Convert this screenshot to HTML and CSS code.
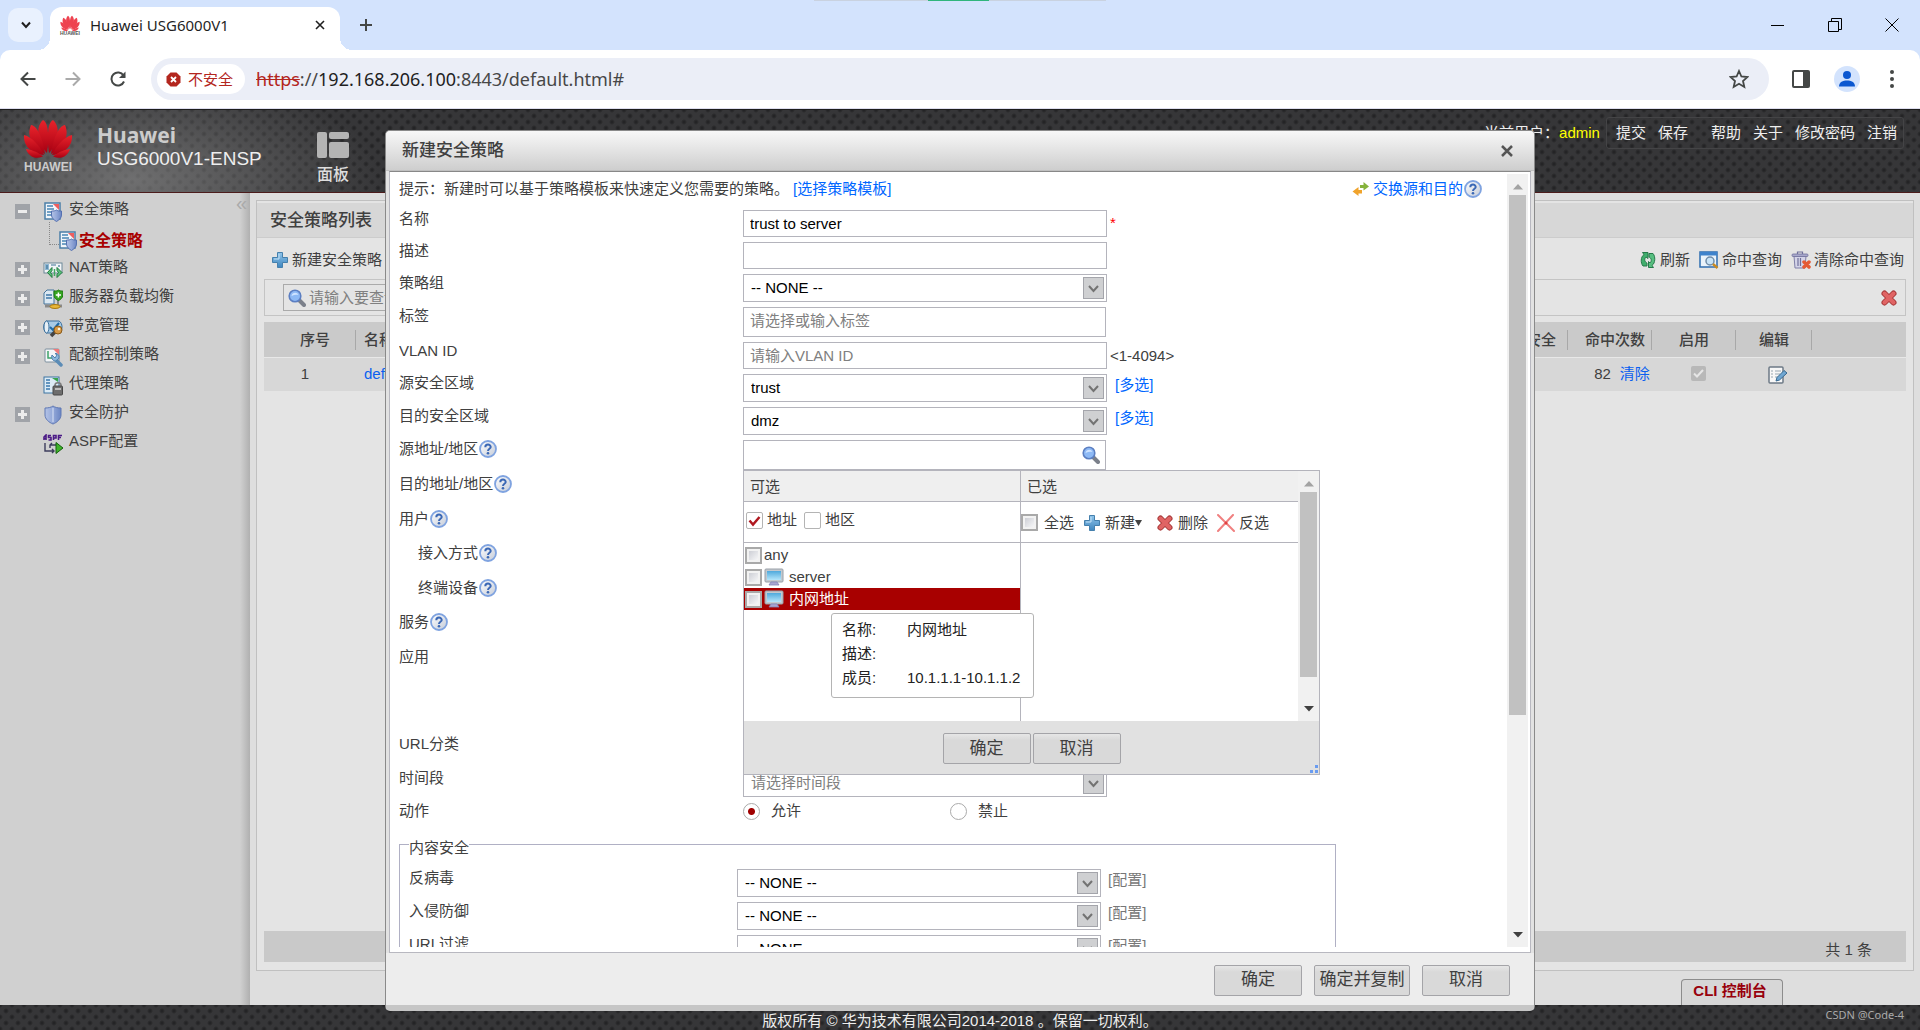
FILE: index.html
```html
<!DOCTYPE html>
<html lang="zh-CN">
<head>
<meta charset="utf-8">
<title>Huawei USG6000V1</title>
<link rel="stylesheet" href="styles.css">
</head>
<body>
<svg class="sprite" aria-hidden="true">
  <defs>
    <linearGradient id="g-red" x1="0" y1="0" x2="0" y2="1"><stop offset="0" stop-color="#e8232b"/><stop offset="1" stop-color="#a80012"/></linearGradient>
    <linearGradient id="g-blue" x1="0" y1="0" x2="0" y2="1"><stop offset="0" stop-color="#8fc4ea"/><stop offset="1" stop-color="#3f86bf"/></linearGradient>
    <linearGradient id="g-screen" x1="0" y1="0" x2="0" y2="1"><stop offset="0" stop-color="#4fa9dc"/><stop offset="1" stop-color="#b5e6fb"/></linearGradient>
    <linearGradient id="g-shield" x1="0" y1="0" x2="1" y2="0"><stop offset="0" stop-color="#b4c3e6"/><stop offset=".5" stop-color="#93a8d8"/><stop offset="1" stop-color="#6c86c4"/></linearGradient>
    <linearGradient id="g-help" x1="0" y1="0" x2="1" y2="1"><stop offset="0" stop-color="#ffffff"/><stop offset="1" stop-color="#c4cbd8"/></linearGradient>
  </defs>
  <symbol id="i-flower" viewBox="0 0 50 40">
    <path d="M24 35C16 27 11 10 20 2C26 5 26 22 24 35Z"/>
    <path d="M26 35C34 27 39 10 30 2C24 5 24 22 26 35Z"/>
    <path d="M22 36C10 30 3 18 8 7C15 8 20 22 22 36Z"/>
    <path d="M28 36C40 30 47 18 42 7C35 8 30 22 28 36Z"/>
    <path d="M21 37C9 36 0 28 1 17C9 19 17 28 21 37Z"/>
    <path d="M29 37C41 36 50 28 49 17C41 19 33 28 29 37Z"/>
    <path d="M20 38.500C12 42 5 38 3 31C10 32 16 35 20 38.500Z"/>
    <path d="M30 38.500C38 42 45 38 47 31C40 32 34 35 30 38.500Z"/>
  </symbol>
  <symbol id="i-help" viewBox="0 0 18 18">
    <circle cx="9" cy="9" r="8" fill="url(#g-help)" stroke="#7fa3e0" stroke-width="1.800"/>
    <path d="M6.300 7.200C6.300 3.700 11.700 3.800 11.700 7C11.700 8.900 9 8.700 9 11" fill="none" stroke="#3b68b5" stroke-width="2"/>
    <circle cx="9" cy="13.300" r="1.300" fill="#3b68b5"/>
  </symbol>
  <symbol id="i-plus" viewBox="0 0 18 18">
    <path d="M6.500 1.500H11.500V6.500H16.500V11.500H11.500V16.500H6.500V11.500H1.500V6.500H6.500Z" fill="url(#g-blue)" stroke="#4580ad" stroke-linejoin="round"/>
    <path d="M8 3V8H3" fill="none" stroke="#c5e2f6" stroke-width="1"/>
  </symbol>
  <symbol id="i-search" viewBox="0 0 18 18">
    <path d="M11 11L16 16" stroke="#7b808a" stroke-width="4" stroke-linecap="round"/>
    <circle cx="7" cy="7" r="5.800" fill="#8db9f5" stroke="#5c7fc2" stroke-width="1.600"/>
    <path d="M3.500 7C4 3.500 9 2.500 10.500 6C8 5.500 6 6 3.500 7Z" fill="#cfe3ff"/>
  </symbol>
  <symbol id="i-cross" viewBox="0 0 18 18">
    <path d="M4.500 4.500L13.500 13.500M13.500 4.500L4.500 13.500" stroke="#a83a3a" stroke-width="6" stroke-linecap="round"/>
    <path d="M4.500 4.500L13.500 13.500M13.500 4.500L4.500 13.500" stroke="#e06464" stroke-width="4" stroke-linecap="round"/>
  </symbol>
  <symbol id="i-thin-cross" viewBox="0 0 18 18">
    <path d="M1 1L17 17M16 1L1 17" stroke="#f08080" stroke-width="2" stroke-linecap="round"/>
    <circle cx="9" cy="9" r="1.500" fill="#e04040"/>
  </symbol>
  <symbol id="i-shield" viewBox="0 0 18 20">
    <path d="M9 1C11 2.500 14 3 17 3V10C17 14 13 17.500 9 19C5 17.500 1 14 1 10V3C4 3 7 2.500 9 1Z" fill="url(#g-shield)" stroke="#5f78b4" stroke-width="1"/>
    <path d="M9 3V17" stroke="#dbe4f7" stroke-width="1"/>
  </symbol>
  <symbol id="i-policy" viewBox="0 0 18 20">
    <rect x="1" y="1" width="15" height="16" fill="#f2f6fa" stroke="#4b7fa8" stroke-width="1.500"/>
    <path d="M3 4H9M3 7H10M3 10H8M3 13H8" stroke="#4a86b5" stroke-width="1.500"/>
    <path d="M9 2H15V8Z" fill="#ee5f5f"/>
    <path d="M12.500 8C14 9 15.500 9 17.500 9V13C17.500 16 15 18 12.500 19.500C10 18 7.500 16 7.500 13V9C9.500 9 11 9 12.500 8Z" fill="url(#g-shield)" stroke="#5470b0" stroke-width="1"/>
  </symbol>
  <symbol id="i-nat" viewBox="0 0 20 18">
    <rect x="1" y="2" width="18" height="10" fill="#f2f5f7" stroke="#6d8798" stroke-width="1"/>
    <rect x="2" y="3" width="4" height="6" fill="#8fb8d4"/><path d="M4 4V8M8 4H13M16 4V6" stroke="#3f7396" stroke-width="1.200"/>
    <path d="M9 6.500L4.500 11.500L9 16.500V13.500L7.500 11.500L9 9.500Z" fill="#5cc07c" stroke="#1d7a3c" stroke-width="1"/>
    <path d="M14 6.500L19 11.500L14 16.500V13.500L15.500 11.500L14 9.500Z" fill="#5cc07c" stroke="#1d7a3c" stroke-width="1"/>
    <path d="M11.500 8V15" stroke="#3fa860" stroke-width="1.500"/>
  </symbol>
  <symbol id="i-balance" viewBox="0 0 20 20">
    <path d="M4 1H11V15H1V4Z" fill="#dbe8f2" stroke="#44749c" stroke-width="1"/>
    <path d="M3 6H9M3 9H9" stroke="#3d76a6" stroke-width="1.500"/>
    <path d="M15 10V16" stroke="#888" stroke-width="2"/><path d="M15.500 1C17 2 18.500 2 19.800 2V6C19.800 9 17.500 10.500 15.500 11.500C13 10.500 11 9 11 6V2C13 2 14 2 15.500 1Z" fill="#36a522" stroke="#1d7a10"/>
    <path d="M12.800 6H18M15.400 3.500V8.500" stroke="#fff" stroke-width="1.500"/>
    <path d="M2 17H19" stroke="#8a8a8a" stroke-width="3"/><ellipse cx="12" cy="17.500" rx="5" ry="2" fill="#e8b738" stroke="#a87a10"/>
  </symbol>
  <symbol id="i-band" viewBox="0 0 20 20">
    <path d="M3 3H16C20 5 20 13 16 15H3C0 12 0 6 3 3Z" fill="#a8cbe6" stroke="#3a6f9c" stroke-width="1"/>
    <ellipse cx="3.500" cy="9" rx="2.500" ry="6" fill="#e6eff6" stroke="#3a6f9c"/>
    <path d="M7 9L10 12L16 5" fill="none" stroke="#1d6aa8" stroke-width="2"/>
    <path d="M8 18L12 14" stroke="#444" stroke-width="3.500"/><circle cx="15" cy="12" r="4" fill="#d69a48" stroke="#8a5a18"/><circle cx="16" cy="11" r="1.300" fill="#fff3d6"/>
  </symbol>
  <symbol id="i-quota" viewBox="0 0 20 20">
    <rect x="2" y="2" width="14" height="13" rx="1" fill="#f3f5f7" stroke="#7c8f9e" stroke-width="1"/>
    <path d="M5 4V11H11" fill="none" stroke="#3fa36a" stroke-width="1.500"/><path d="M10 2H16V8Z" fill="#ee7a7a"/>
    <path d="M12 12L18 18" stroke="#5c8cb6" stroke-width="3.500" stroke-linecap="round"/>
    <path d="M9 8L12 11L14 8L12 6.500C15 6 17 9 15.500 12L12.500 14C9.500 14 8 11 9 8Z" fill="#8db8dc" stroke="#4f81ac" stroke-width="1"/>
  </symbol>
  <symbol id="i-proxy" viewBox="0 0 20 20">
    <rect x="1" y="1" width="15" height="16" fill="#dcebf5" stroke="#3c74a2" stroke-width="1"/>
    <path d="M3 4H7M3 7H7M3 10H7M3 13H7" stroke="#3b79ad" stroke-width="1.500"/><path d="M9 2L15 6V2Z" fill="#38a34c"/>
    <path d="M12 12V9C12 6 18 6 18 9V12" fill="none" stroke="#7b7b7b" stroke-width="1.500"/><rect x="10" y="10" width="9.500" height="9" rx="1" fill="#6d6d6d" stroke="#484848"/><path d="M12 13H18" stroke="#d9d9d9" stroke-width="1.500"/>
  </symbol>
  <symbol id="i-aspf" viewBox="0 0 20 20">
    <path d="M1 6V3L3 1V6M1 4.500H3M8 1.500H5.500V3.500H8V6H5.500M10.500 6V1.500H13V4H10.500M15.500 6V1.500H19M15.500 3.500H18" fill="none" stroke="#4b1a86" stroke-width="1.600"/>
    <path d="M2 9V17H11M9 15L11 17L9 19M13 11H7M9 9L7 11V14" fill="none" stroke="#3c3c5c" stroke-width="1.400"/>
    <path d="M13 8.500L20 14L13 19.500Z" fill="#3fb32a" stroke="#14600c" stroke-width="1"/>
  </symbol>
  <symbol id="i-refresh" viewBox="0 0 18 18">
    <path d="M8 15H4C1.500 12 1.500 6 5 3.500L3.500 1.500H9V7.500L7 6C5 8 5.500 11 8 12Z" fill="#3fae6c" stroke="#26794a" stroke-width="1"/>
    <path d="M10 2.500H14C16.500 5.500 16.500 12 13 14.500L14.500 16.500H9.500V10.500L11 12C13 10 12.500 7 10 6Z" fill="#57be80" stroke="#26794a" stroke-width="1"/>
  </symbol>
  <symbol id="i-query" viewBox="0 0 20 18">
    <rect x="1" y="1" width="17" height="15" fill="#eaf3fb" stroke="#2e6db0" stroke-width="1.500"/>
    <rect x="1" y="1" width="17" height="3.500" fill="#3f83cc"/>
    <circle cx="11" cy="10" r="4" fill="#c9e4f8" stroke="#6f8ca8" stroke-width="1.500"/><path d="M14 13L18.500 17" stroke="#c98a22" stroke-width="2.500"/>
  </symbol>
  <symbol id="i-trash" viewBox="0 0 20 18">
    <path d="M3 5H15L14 17H4Z" fill="#d4d4e8" stroke="#7f7fa8" stroke-width="1"/><rect x="1" y="3" width="16" height="2.500" rx="1" fill="#a9a9cc" stroke="#70709c" stroke-width=".8"/>
    <path d="M6.500 3V1H11.500V3M7 7V15M9.500 7V15" fill="none" stroke="#70709c" stroke-width="1.200"/>
    <path d="M13 11L18 16M18 11L13 16" stroke="#e55a34" stroke-width="3.500" stroke-linecap="round"/>
  </symbol>
  <symbol id="i-edit" viewBox="0 0 20 18">
    <rect x="1" y="1" width="14" height="16" rx="1" fill="#f7f7f7" stroke="#6d7a86" stroke-width="1.500"/>
    <path d="M3 5H5M3 8H5M3 11H5M7 5H13M7 8H12M7 11H10" stroke="#9aa7b2" stroke-width="1.200"/>
    <path d="M8 15L9 11.500L16 4.500L19 7L11.500 14Z" fill="#6fa6d2" stroke="#37688f" stroke-width="1"/>
  </symbol>
  <symbol id="i-swap" viewBox="0 0 18 16">
    <path d="M8 4H11.500V1L17 5.500L11.500 9.500V7H8Z" fill="#86b33c"/><path d="M10 9H6.500V6L0.500 10.500L6.500 15V12.500H10Z" fill="#f0a32c"/>
  </symbol>
  <symbol id="i-pc" viewBox="0 0 20 18">
    <rect x="1" y="1" width="18" height="13" rx="1" fill="#c3c9cf" stroke="#9aa0a8"/><rect x="3" y="3" width="14" height="9" fill="url(#g-screen)"/>
    <path d="M7 14H13L15 17H5Z" fill="#a8a6d0" stroke="#8784b8" stroke-width=".8"/>
  </symbol>
  <symbol id="i-tri-up" viewBox="0 0 10 6"><path d="M0 5.500L5 0L10 5.500Z" fill="#a3a3a3"/></symbol>
  <symbol id="i-tri-down" viewBox="0 0 10 6"><path d="M0 0L5 5.500L10 0Z" fill="#404040"/></symbol>
</svg>

<header class="chrome">
  <div class="capture-strip"><span></span></div>
  <div class="tabstrip">
    <button class="tab-search" aria-label="搜索标签页"><svg width="10" height="8" viewBox="0 0 10 8"><path d="M1 1.500L5 6L9 1.500" fill="none" stroke="#1f1f1f" stroke-width="2"/></svg></button>
    <div class="tab">
      <span class="favicon"><svg width="20" height="16" fill="#ee4350"><use href="#i-flower"/></svg><span>HUAWEI</span></span>
      <span class="tab-title">Huawei USG6000V1</span>
      <button class="plain" aria-label="关闭标签页"><svg width="10" height="10" viewBox="0 0 10 10"><path d="M1 1L9 9M9 1L1 9" stroke="#1f1f1f" stroke-width="1.600"/></svg></button>
    </div>
    <button class="plain new-tab" aria-label="新标签页"><svg width="14" height="14" viewBox="0 0 14 14"><path d="M7 1V13M1 7H13" stroke="#444746" stroke-width="2"/></svg></button>
    <div class="window-buttons">
      <button class="plain" aria-label="最小化"><svg width="14" height="14" viewBox="0 0 14 14"><path d="M0 7.500H13" stroke="#000"/></svg></button>
      <button class="plain" aria-label="还原"><svg width="14" height="14" viewBox="0 0 14 14"><path d="M.5 3.500H10.500V13.500H.5ZM3.500 3V.5H13.500V11.500H11" fill="none" stroke="#000"/></svg></button>
      <button class="plain" aria-label="关闭"><svg width="14" height="14" viewBox="0 0 14 14"><path d="M.5 .5L13.500 13.500M13.500 .5L.5 13.500" stroke="#000"/></svg></button>
    </div>
  </div>
  <div class="toolbar">
    <button class="plain" aria-label="后退"><svg width="16" height="16" viewBox="0 0 16 16"><path d="M15.500 8H2M8 1.500L1.500 8L8 14.500" fill="none" stroke="#444746" stroke-width="2"/></svg></button>
    <button class="plain" aria-label="前进"><svg width="16" height="16" viewBox="0 0 16 16"><path d="M.5 8H14M8 1.500L14.500 8L8 14.500" fill="none" stroke="#aaa" stroke-width="2"/></svg></button>
    <button class="plain" aria-label="重新加载"><svg width="16" height="16" viewBox="0 0 16 16"><path d="M14 10.500A6.500 6.500 0 1 1 13.500 4.500L14.500 6" fill="none" stroke="#444746" stroke-width="2"/><path d="M15.500 .5V7H9Z" fill="#444746"/></svg></button>
    <div class="omnibox">
      <span class="chip"><svg width="15" height="15" viewBox="0 0 15 15"><path d="M4.500 .5H10.500L14.500 4.500V10.500L10.500 14.500H4.500L.5 10.500V4.500Z" fill="#b3261e"/><path d="M5 5L10 10M10 5L5 10" stroke="#fff" stroke-width="1.800"/></svg>不安全</span>
      <span class="url"><s>https</s><span>://</span><b>192.168.206.100</b>:8443/default.html#</span>
      <svg width="20" height="20" viewBox="0 0 20 20"><path d="M10 2L12.400 7.500L18.500 8L14 12L15.300 18L10 14.800L4.700 18L6 12L1.500 8L7.600 7.500Z" fill="none" stroke="#444746" stroke-width="1.800"/></svg>
    </div>
    <div class="tools">
      <svg width="18" height="18" viewBox="0 0 18 18"><rect x="1" y="1" width="16" height="16" rx="1" fill="none" stroke="#444746" stroke-width="2"/><rect x="11" y="1" width="6" height="16" fill="#444746"/></svg>
      <svg width="26" height="26" viewBox="0 0 26 26"><circle cx="13" cy="13" r="13" fill="#d3e3fd"/><circle cx="13" cy="9" r="4" fill="#0b57d0"/><path d="M5 20.500C5 16 9 14.500 13 14.500S21 16 21 20.500Z" fill="#0b57d0"/></svg>
      <svg width="6" height="18" viewBox="0 0 6 18" fill="#444746"><circle cx="3" cy="2" r="2"/><circle cx="3" cy="9" r="2"/><circle cx="3" cy="16" r="2"/></svg>
    </div>
  </div>
</header>

<div class="app">
  <header class="banner">
    <div class="logo"><svg width="50" height="40" fill="url(#g-red)"><use href="#i-flower"/></svg><span>HUAWEI</span></div>
    <div class="product"><strong>Huawei</strong><span>USG6000V1-ENSP</span></div>
    <a class="panel-link" href="#"><svg width="32" height="26" viewBox="0 0 32 26" fill="#b4b4b4"><rect width="10" height="26" rx="2"/><rect x="12" width="20" height="7" rx="2"/><rect x="12" y="10" width="20" height="16" rx="2"/></svg>面板</a>
    <div class="account">
      <span class="who">当前用户：<em>admin</em></span>
      <nav class="account-menu"><a href="#">提交</a><a href="#">保存</a><a href="#" class="apart">帮助</a><a href="#">关于</a><a href="#">修改密码</a><a href="#">注销</a></nav>
    </div>
  </header>

  <div class="workspace">
    <aside class="sidebar">
      <button class="collapse" aria-label="收起">«</button>
      <ul class="tree">
        <li><button class="toggle minus" aria-label="折叠"></button><svg width="18" height="20"><use href="#i-policy"/></svg><a href="#">安全策略</a></li>
        <li class="child"><span class="branch"></span><svg width="18" height="20"><use href="#i-policy"/></svg><a href="#">安全策略</a></li>
        <li><button class="toggle" aria-label="展开"></button><svg width="20" height="18"><use href="#i-nat"/></svg><a href="#">NAT策略</a></li>
        <li><button class="toggle" aria-label="展开"></button><svg width="20" height="20"><use href="#i-balance"/></svg><a href="#">服务器负载均衡</a></li>
        <li><button class="toggle" aria-label="展开"></button><svg width="20" height="20"><use href="#i-band"/></svg><a href="#">带宽管理</a></li>
        <li><button class="toggle" aria-label="展开"></button><svg width="20" height="20"><use href="#i-quota"/></svg><a href="#">配额控制策略</a></li>
        <li><span class="toggle none"></span><svg width="20" height="20"><use href="#i-proxy"/></svg><a href="#">代理策略</a></li>
        <li><button class="toggle" aria-label="展开"></button><svg width="18" height="20"><use href="#i-shield"/></svg><a href="#">安全防护</a></li>
        <li><span class="toggle none"></span><svg width="20" height="20"><use href="#i-aspf"/></svg><a href="#">ASPF配置</a></li>
      </ul>
    </aside>

    <main class="content">
      <section class="panel">
        <h2>安全策略列表</h2>
        <div class="panel-tools">
          <a href="#" class="first"><svg width="18" height="18"><use href="#i-plus"/></svg>新建安全策略</a>
          <a href="#"><svg width="18" height="18"><use href="#i-refresh"/></svg>刷新</a>
          <a href="#"><svg width="20" height="18"><use href="#i-query"/></svg>命中查询</a>
          <a href="#"><svg width="20" height="18"><use href="#i-trash"/></svg>清除命中查询</a>
        </div>
        <div class="filter">
          <label class="search"><svg width="18" height="18"><use href="#i-search"/></svg><input type="text" placeholder="请输入要查询的内容" aria-label="查询"></label>
          <button class="plain" aria-label="清空"><svg width="18" height="18"><use href="#i-cross"/></svg></button>
        </div>
        <table class="policies">
          <colgroup><col class="c-no"><col><col class="c-mid"><col class="c-mid"><col class="c-mid"><col class="c-edit"><col class="c-last"></colgroup>
          <thead><tr><th class="inset">序号</th><th class="left">名称</th><th>内容安全</th><th class="inset">命中次数</th><th>启用</th><th>编辑</th><th></th></tr></thead>
          <tbody><tr><td class="number">1</td><td class="left"><a href="#">default</a></td><td></td><td class="hits">82<a href="#">清除</a></td><td class="enabled"><input type="checkbox" class="off" checked disabled aria-label="启用"></td><td class="edit"><svg width="20" height="18"><use href="#i-edit"/></svg></td><td></td></tr></tbody>
        </table>
        <div class="pager">共 1 条</div>
      </section>
      <button class="cli">CLI 控制台</button>
    </main>
  </div>

  <footer class="copyright"><span>版权所有 © 华为技术有限公司2014-2018 。保留一切权利。</span><small>CSDN @Code-4</small></footer>

  <section class="dialog" role="dialog" aria-labelledby="dlg-title">
    <header class="dialog-head"><h3 id="dlg-title">新建安全策略</h3><button class="plain" aria-label="关闭"><svg width="12" height="12" viewBox="0 0 12 12"><path d="M1 1L11 11M11 1L1 11" stroke="#555" stroke-width="2.500"/></svg></button></header>
    <div class="dialog-body">
      <form class="form" id="policy">
        <div class="hint"><span>提示：新建时可以基于策略模板来快速定义您需要的策略。</span><a href="#">[选择策略模板]</a>
          <a href="#" class="swap"><svg width="18" height="16"><use href="#i-swap"/></svg>交换源和目的<svg width="18" height="18"><use href="#i-help"/></svg></a></div>
        <div class="row"><label for="f-name">名称</label><input id="f-name" class="field" type="text" value="trust to server"><span class="note required">*</span></div>
        <div class="row"><label for="f-desc">描述</label><input id="f-desc" class="field" type="text"></div>
        <div class="row"><label for="f-group">策略组</label><select id="f-group" class="field"><option>-- NONE --</option></select></div>
        <div class="row"><label for="f-tag">标签</label><input id="f-tag" class="field tall tag" type="text" placeholder="请选择或输入标签"></div>
        <div class="row"><label for="f-vlan">VLAN ID</label><input id="f-vlan" class="field" type="text" placeholder="请输入VLAN ID"><span class="note">&lt;1-4094&gt;</span></div>
        <div class="row"><label for="f-src">源安全区域</label><select id="f-src" class="field"><option>trust</option></select><a href="#" class="link">[多选]</a></div>
        <div class="row"><label for="f-dst">目的安全区域</label><select id="f-dst" class="field"><option>dmz</option></select><a href="#" class="link">[多选]</a></div>
        <div class="row address"><label for="f-addr">源地址/地区<svg width="18" height="18"><use href="#i-help"/></svg></label>
          <div class="picker">
            <input id="f-addr" class="field tall" type="text"><svg class="lens" width="18" height="18"><use href="#i-search"/></svg>
            <div class="popup">
              <div class="popup-main">
                <div class="pane">
                  <div class="pane-head">可选</div>
                  <div class="pane-tools kinds"><label><input type="checkbox" class="box" checked>地址</label><label><input type="checkbox" class="box">地区</label></div>
                  <ul class="options">
                    <li><label><input type="checkbox" class="old">any</label></li>
                    <li><label><input type="checkbox" class="old"><svg width="20" height="18"><use href="#i-pc"/></svg>server</label></li>
                    <li class="active"><label><input type="checkbox" class="old"><svg width="20" height="18"><use href="#i-pc"/></svg>内网地址</label></li>
                  </ul>
                </div>
                <div class="pane">
                  <div class="pane-head">已选</div>
                  <div class="pane-tools actions"><label><input type="checkbox" class="old">全选</label><a href="#" class="new"><svg width="18" height="18"><use href="#i-plus"/></svg>新建<svg width="7" height="6" viewBox="0 0 10 6" preserveAspectRatio="none"><path d="M0 0L5 6L10 0Z" fill="#444"/></svg></a><a href="#"><svg width="18" height="18"><use href="#i-cross"/></svg>删除</a><a href="#"><svg width="18" height="18"><use href="#i-thin-cross"/></svg>反选</a></div>
                </div>
                <div class="scrollbar"><svg width="10" height="6"><use href="#i-tri-up"/></svg><i></i><svg width="10" height="6"><use href="#i-tri-down"/></svg></div>
              </div>
              <div class="popup-foot"><button type="button" class="btn">确定</button><button type="button" class="btn">取消</button></div>
              <svg class="grip" width="8" height="8" viewBox="0 0 8 8" fill="#6a9cf0"><path d="M5 0H8V3H5ZM5 5H8V8H5ZM0 5H3V8H0Z"/></svg>
              <dl class="tooltip"><dt>名称:</dt><dd>内网地址</dd><dt>描述:</dt><dd></dd><dt>成员:</dt><dd>10.1.1.1-10.1.1.2</dd></dl>
            </div>
          </div>
        </div>
        <div class="row blank"><span class="name">目的地址/地区<svg width="18" height="18"><use href="#i-help"/></svg></span></div>
        <div class="row blank less"><span class="name">用户<svg width="18" height="18"><use href="#i-help"/></svg></span></div>
        <div class="row blank"><span class="name sub">接入方式<svg width="18" height="18"><use href="#i-help"/></svg></span></div>
        <div class="row blank less"><span class="name sub">终端设备<svg width="18" height="18"><use href="#i-help"/></svg></span></div>
        <div class="row blank"><span class="name">服务<svg width="18" height="18"><use href="#i-help"/></svg></span></div>
        <div class="row blank app-row"><span class="name">应用</span></div>
        <div class="row blank less"><span class="name">URL分类</span></div>
        <div class="row"><label for="f-time">时间段</label><select id="f-time" class="field pale"><option>请选择时间段</option></select></div>
        <div class="row radios"><span class="name">动作</span><label><input type="radio" name="act" checked>允许</label><label><input type="radio" name="act">禁止</label></div>
        <fieldset>
          <legend>内容安全</legend>
          <div class="row"><label for="f-av">反病毒</label><select id="f-av" class="field"><option>-- NONE --</option></select><span class="conf">[配置]</span></div>
          <div class="row"><label for="f-ips">入侵防御</label><select id="f-ips" class="field"><option>-- NONE --</option></select><span class="conf">[配置]</span></div>
          <div class="row"><label for="f-url">URL过滤</label><select id="f-url" class="field"><option>-- NONE --</option></select><span class="conf">[配置]</span></div>
        </fieldset>
      </form>
      <div class="scrollbar"><svg width="10" height="6"><use href="#i-tri-up"/></svg><i></i><svg width="10" height="6"><use href="#i-tri-down"/></svg></div>
    </div>
    <footer class="dialog-foot"><button class="btn">确定</button><button class="btn wide">确定并复制</button><button class="btn">取消</button></footer>
  </section>
</div>
</body>
</html>
```
FILE: styles.css
```css
* { box-sizing: border-box; }
body {
  margin: 0;
  height: 100vh;
  display: flex;
  flex-direction: column;
  overflow: hidden;
  font: 15px/18px "Liberation Sans", "Noto Sans CJK SC", sans-serif;
  color: #404040;
}
a { color: inherit; text-decoration: none; }
ul, dl, dd, h2, h3, fieldset, legend { margin: 0; padding: 0; font-weight: normal; }
ul { list-style: none; }
svg { flex: none; }
button, input, select { font: inherit; color: inherit; margin: 0; }
.sprite { position: absolute; width: 0; height: 0; }
.plain { border: 0; padding: 0; background: none; display: flex; }

/* browser frame */
.chrome { flex: none; background: #d3e3fd; position: relative; font-family: "Noto Sans", "Noto Sans CJK SC", sans-serif; }
.capture-strip { position: absolute; top: 0; left: 0; right: 0; height: 1px; display: flex; justify-content: center; }
.capture-strip span { width: 292px; background: linear-gradient(90deg, #c9d2e0 39%, #2fb57c 39%, #2fb57c 60%, #c9d2e0 60%); }
.tabstrip { height: 50px; display: flex; align-items: center; padding: 0 21px 0 8px; }
.tab-search { width: 35px; height: 34px; border: 0; border-radius: 10px; background: #e9f1fe; display: flex; align-items: center; justify-content: center; }
.tab { position: relative; align-self: flex-end; width: 290px; height: 43px; margin-left: 7px; padding: 0 15px 7px 10px; border-radius: 12px 12px 0 0; background: #fff; display: flex; align-items: center; gap: 10px; }
.tab::before, .tab::after { content: ""; position: absolute; bottom: 0; width: 12px; height: 12px; }
.tab::before { left: -12px; background: radial-gradient(circle at 0 0, transparent 12px, #fff 12px); }
.tab::after { right: -12px; background: radial-gradient(circle at 100% 0, transparent 12px, #fff 12px); }
.favicon { width: 20px; display: flex; flex-direction: column; align-items: center; font: bold 5px/4px "Liberation Sans", sans-serif; color: #555; }
.tab-title { flex: 1; color: #1f1f1f; }
.new-tab { margin-left: 19px; }
.window-buttons { margin-left: auto; display: flex; gap: 43px; }
.toolbar { height: 59px; display: flex; align-items: center; padding: 0 25px 0 20px; border-radius: 10px 10px 0 0; background: #fff; border-bottom: 1px solid #dde; }
.toolbar > .plain { margin-right: 29px; }
.omnibox { flex: 1; height: 42px; margin-left: -4px; padding: 0 20px 0 6px; border-radius: 21px; background: #ebeef7; display: flex; align-items: center; }
.chip { height: 30px; padding: 0 12px 0 9px; border-radius: 15px; background: #fff; color: #b3261e; display: flex; align-items: center; gap: 7px; }
.url { flex: 1; margin-left: 11px; font-size: 18px; color: #474747; }
.url b { font-weight: normal; color: #1f1f1f; }
.url s { color: #b3261e; }
.tools { display: flex; align-items: center; gap: 24px; margin-left: 23px; }
.tools svg:last-child { margin-left: 5px; }

/* application shell */
.app { position: relative; flex: 1; min-height: 0; display: flex; flex-direction: column; }
.banner, .copyright { background: radial-gradient(circle, #242426 1px, transparent 3px) 0 0 / 12px 12px, radial-gradient(circle, #242426 1px, transparent 3px) 6px 6px / 12px 12px, #363638; }
.banner { position: relative; flex: none; height: 84px; display: flex; border-top: 1px solid #1c1c1c; border-bottom: 1px solid #4c1c1c; color: #eee; }
.banner::before { content: ""; position: absolute; inset: 0; background: radial-gradient(ellipse 250px 110px at 130px 70px, rgba(150, 150, 150, .6), transparent); }
.banner > * { position: relative; }
.logo { width: 50px; margin: 8px 0 0 23px; display: flex; flex-direction: column; }
.logo span { font: bold 12px/18px "Liberation Sans", sans-serif; color: #ccc; align-self: center; }
.product { width: 220px; margin: 13px 0 0 24px; display: flex; flex-direction: column; line-height: 24px; font-size: 19px; }
.product strong { font-size: 21px; color: #ccc; font-family: "Noto Sans", sans-serif; }
.panel-link { margin-top: 22px; font-size: 16px; line-height: 34px; font-weight: 500; display: flex; flex-direction: column; color: #ddd; }
.account { margin: 7px 16px 0 auto; height: 32px; display: flex; align-items: center; line-height: 30px; }
.who { margin-right: 6px; white-space: nowrap; }
.who em { font-style: normal; color: #ffff00; }
.account-menu { display: flex; gap: 12px; padding: 0 6px 0 9px; border: 1px solid #444446; border-radius: 3px; white-space: nowrap; }
.account-menu .apart { margin-left: 11px; }
.workspace { flex: 1; min-height: 0; display: flex; }
.sidebar { position: relative; flex: none; width: 250px; padding-top: 4px; background: linear-gradient(90deg, transparent 240px, #b0b0b0) #d0d0d0; }
.collapse { position: absolute; top: 0; right: 0; border: 0; padding: 0 3px; background: none; font-size: 20px; line-height: 20px; color: #aaa; }
.tree li { height: 29px; display: flex; align-items: center; padding-left: 15px; }
.tree svg { margin-left: 14px; margin-right: 7px; }
.tree svg[width="20"] { margin-left: 13px; margin-right: 6px; }
.tree a { padding-bottom: 6px; }
.toggle { width: 15px; height: 15px; padding: 0; border: 0; background: linear-gradient(#ececec, #ececec) center / 9px 3px no-repeat, linear-gradient(#ececec, #ececec) center / 3px 9px no-repeat, #a0a3a8; }
.toggle.minus { background: linear-gradient(#ececec, #ececec) center / 9px 3px no-repeat, #a0a3a8; }
.toggle.none { background: none; }
.tree .child { padding-left: 49px; color: #a80000; font-weight: bold; font-size: 16px; }
.tree .child svg { margin: 0 2px 0 0; }
.tree .child a { padding-bottom: 0; }
.branch { width: 10px; height: 23px; align-self: flex-start; margin-top: -4px; border: 1px dotted #888; border-width: 0 0 1px 1px; }

.content { flex: 1; min-width: 0; padding: 7px 6px 0; background: #dedede; display: flex; flex-direction: column; }
.panel { flex: 1; min-height: 0; padding: 0 7px 8px; border: 1px solid #c0c0c0; background: #e4e4e4; display: flex; flex-direction: column; }
.panel h2 { margin: 2px -7px 0; padding: 2px 13px 0; border-bottom: 1px solid #ccc; background: #d7d7d7; font-size: 17px; line-height: 32px; font-weight: 500; }
.panel-tools { height: 41px; display: flex; align-items: center; gap: 9px; padding: 2px 2px 0 7px; white-space: nowrap; }
.panel-tools a { display: flex; align-items: center; gap: 3px; }
.panel-tools .first { margin-right: auto; }
.filter { height: 37px; display: flex; align-items: center; justify-content: space-between; padding: 0 7px 0 18px; border: 1px solid #c4c4c4; }
.search { height: 27px; width: 300px; display: flex; align-items: center; gap: 3px; padding-left: 4px; border: 1px solid #aaa; }
.search input { flex: 1; min-width: 0; border: 0; padding: 0; background: none; outline: 0; }
::placeholder { color: #808080; opacity: 1; }
.policies { margin-top: 6px; width: 100%; table-layout: fixed; border-collapse: collapse; text-align: center; }
.c-no { width: 92px; } .c-mid { width: 84px; } .c-edit { width: 76px; } .c-last { width: 94px; }
.policies th { position: relative; height: 35px; padding: 2px 0 0; background: #cacaca; font-weight: 500; }
.policies th:not(:last-child)::after { content: ""; position: absolute; right: 0; top: 8px; height: 20px; border-right: 1px solid #a8a8a8; }
.policies td { height: 34px; padding: 0; background: #d7d7d7; border-top: 1px solid #e8e8e8; }
.policies .inset { padding-left: 10px; }
.policies .number { padding-right: 10px; }
.policies .left { text-align: left; padding-left: 8px; }
.policies svg { vertical-align: middle; }
.policies a { color: #0a5ff0; }
.policies .hits { padding-left: 24px; white-space: nowrap; }
.hits a { margin-left: 9px; }
.policies .enabled { padding: 0 0 4px 8px; }
.policies .edit { padding-left: 8px; }
.pager { margin-top: auto; height: 31px; padding: 0 34px; background: #c9c9c9; line-height: 38px; text-align: right; }
.cli { align-self: flex-end; margin: 8px 131px 0 0; width: 102px; height: 26px; padding: 0 4px 4px 0; border: 1px solid #8c8c8c; border-bottom: 0; border-radius: 4px 4px 0 0; background: #d7d7d7; color: #98000c; font-weight: bold; }
.copyright { flex: none; height: 25px; position: relative; text-align: center; line-height: 32px; color: #eee; overflow: hidden; }
.copyright small { position: absolute; right: 16px; top: 0; font: 11px/20px "Noto Sans", sans-serif; color: #aaa; }

/* dialog */
.dialog { position: absolute; inset: 21px 385px 19px; display: flex; flex-direction: column; border: 1px solid #8a8a8a; border-bottom: 6px solid #c6c6c6; border-radius: 5px; background: #e2e2e2; }
.dialog-head { flex: none; height: 40px; display: flex; align-items: center; justify-content: space-between; padding: 0 21px 0 16px; border-radius: 4px 4px 0 0; border-bottom: 1px solid #c0c0c0; background: linear-gradient(#f8f8f8, #cecece); }
.dialog-head h3 { font-size: 17px; font-weight: 500; }
.dialog-body { flex: 1; min-height: 0; margin: 0 3px; padding: 2px 2px 5px 9px; border: 1px solid #b8b8c0; border-top-color: #888; background: #fff; display: flex; }
.form { flex: 1; min-width: 0; overflow: hidden; }
.scrollbar { flex: none; width: 21px; padding: 10px 2px 9px; background: #f1f1f1; display: flex; flex-direction: column; align-items: center; }
.scrollbar i { width: 17px; flex: none; height: 69%; margin: 5px 0 auto; background: #c1c1c1; }
.popup .scrollbar i { height: 80%; }
.hint { height: 28px; margin-bottom: 8px; padding-top: 1px; display: flex; align-items: center; white-space: nowrap; }
.hint a { color: #0066ff; margin-left: 4px; }
.hint .swap { margin-left: auto; margin-right: 25px; display: flex; align-items: center; gap: 3px; }
.hint .swap svg:last-child { margin-left: -2px; }
.row { display: flex; align-items: flex-start; margin-bottom: 5px; }
.row > label:first-child, .name { flex: none; width: 344px; display: flex; align-items: center; gap: 1px; height: 18px; }
.field { width: 364px; height: 27px; padding: 0 6px; border: 1px solid #b4b4bc; border-radius: 0; background: #fff; color: #000; outline: 0; }
select.field { height: 28px; padding: 0 7px; appearance: none; background: url("data:image/svg+xml,%3Csvg xmlns='http://www.w3.org/2000/svg' width='21' height='22'%3E%3Crect x='.5' y='.5' width='20' height='21' fill='%23cfd0d2' stroke='%23a4a5ab'/%3E%3Cpath d='M6 9L10.500 14L15 9' fill='none' stroke='%23737373' stroke-width='2'/%3E%3C/svg%3E") right 2px top 2px no-repeat #fff; }
.field.tall { width: 363px; height: 30px; }
.field.tag { padding-bottom: 4px; }
.field.pale { color: #808080; }
.note { margin: 5px 0 0 3px; }
.note.required { margin-top: 4px; color: #f00; }
.link { margin: 2px 0 0 8px; color: #0066ff; }
.conf { margin: 2px 0 0 7px; color: #777; }
.blank { height: 30px; }
.blank.less { height: 29px; }
.blank.app-row { height: 82px; }
.name.sub { padding-left: 19px; }
.picker { position: relative; display: flex; }
.lens { position: absolute; right: 6px; top: 6px; }
.radios { height: 24px; margin-bottom: 5px; }
.radios label { width: 207px; height: 18px; display: flex; align-items: center; gap: 11px; }
input[type="radio"] { appearance: none; width: 17px; height: 17px; border: 1px solid #aaa; border-radius: 50%; background: #fff; }
input[type="radio"]:checked { background: radial-gradient(circle, #a00000 3px, #fff 4px); }
fieldset { width: 937px; padding: 0 9px; border: 1px solid #b0b0c4; }
legend { padding-top: 8px; height: 26px; margin-bottom: 12px; }
fieldset .row > label:first-child { width: 328px; }

input[type="checkbox"] { flex: none; appearance: none; width: 17px; height: 17px; border: 1px solid #b4b4b4; background: #fff; }
input.box { border-radius: 2px; }
input.box:checked { background: url("data:image/svg+xml,%3Csvg xmlns='http://www.w3.org/2000/svg' width='15' height='15'%3E%3Cpath d='M2.500 7.500L6 11.500L12.500 4' fill='none' stroke='%23b01820' stroke-width='2.500'/%3E%3C/svg%3E"); }
input.old { border: 2px solid #a9a9a9; background: linear-gradient(135deg, #c4c6ce, #fff); box-shadow: inset 0 0 0 2px #f2f2f2; }
input.off { vertical-align: middle; width: 15px; height: 15px; border: 0; border-radius: 2px; background: url("data:image/svg+xml,%3Csvg xmlns='http://www.w3.org/2000/svg' width='15' height='15'%3E%3Cpath d='M3 7.500L6 10.500L12 4' fill='none' stroke='%23e6e6e6' stroke-width='2'/%3E%3C/svg%3E") #b8b8b8; }

.popup { position: absolute; z-index: 1; top: 30px; left: 0; width: 577px; border: 1px solid #b4b4bc; background: #fff; }
.popup-main { height: 250px; display: flex; }
.pane { width: 276px; display: flex; flex-direction: column; }
.pane + .pane { border-left: 1px solid #b4b4bc; width: auto; flex: 1; }
.pane-head { padding: 0 6px; background: #efefef; line-height: 32px; height: 31px; border-bottom: 1px solid #b4b4bc; }
.pane-tools { height: 41px; display: flex; align-items: center; border-bottom: 1px solid #b4b4bc; white-space: nowrap; }
.pane-tools label, .pane-tools a { display: flex; align-items: center; gap: 4px; }
.kinds { padding: 0 2px 4px; gap: 7px; }
.actions { padding-top: 1px; gap: 9px; }
.actions label { gap: 6px; }
.actions .new { margin-right: 5px; }
.actions .new svg:last-child { margin-left: -4px; }
.options { padding-top: 1px; }
.options li { height: 22px; padding-left: 1px; }
.options label { height: 22px; display: flex; align-items: center; gap: 2px; }
.options svg { margin-right: 3px; }
.options .active { background: #a80000; color: #fff; }
.popup-foot { height: 53px; display: flex; align-items: center; justify-content: center; gap: 2px; padding-top: 2px; background: #e1e1e1; }
.grip { position: absolute; right: 1px; bottom: 1px; }
.tooltip { position: absolute; left: 87px; top: 142px; padding: 4px 13px 7px 10px; border: 1px solid #b4b4b4; border-radius: 3px; background: #fff; color: #222; display: grid; grid-template-columns: 65px auto; line-height: 24px; white-space: nowrap; }
.btn { width: 88px; height: 31px; padding: 0; border: 1px solid #a4a4a8; border-radius: 2px; background: linear-gradient(#e6e6e6, #d9d9d9 6px); font-size: 17px; }
.btn.wide { width: 96px; }
.dialog-foot { flex: none; height: 52px; display: flex; align-items: center; justify-content: flex-end; gap: 12px; padding: 2px 24px 0 0; background: #ededed; }
```
